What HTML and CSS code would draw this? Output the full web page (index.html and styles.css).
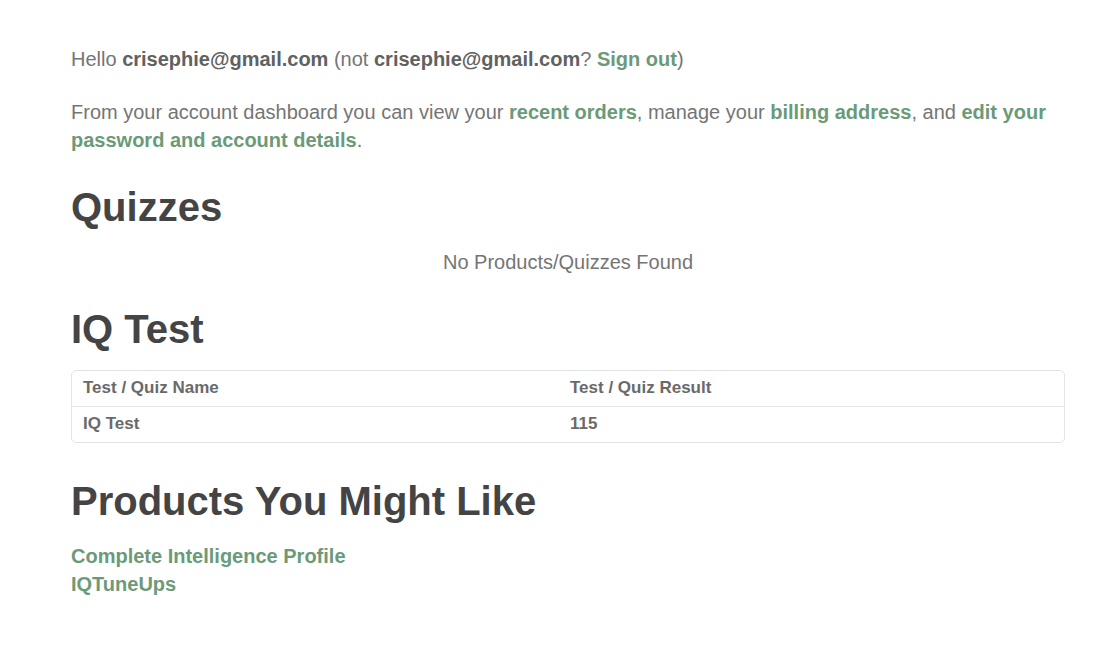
FILE: index.html
```html
<!DOCTYPE html>
<html>
<head>
<meta charset="utf-8">
<link rel="stylesheet" href="styles.css">
</head>
<body>
<main class="account">
  <p class="greet">Hello <strong>crisephie@gmail.com</strong> (not <strong>crisephie@gmail.com</strong>? <a href="#">Sign out</a>)</p>
  <p class="intro">From your account dashboard you can view your <a href="#">recent orders</a>, manage your <a href="#">billing address</a>, and <a href="#">edit your password and account details</a>.</p>

  <h2 class="heading">Quizzes</h2>
  <p class="empty">No Products/Quizzes Found</p>

  <h2 class="heading">IQ Test</h2>
  <table class="results">
    <thead>
      <tr><th class="col-name">Test / Quiz Name</th><th>Test / Quiz Result</th></tr>
    </thead>
    <tbody>
      <tr><td class="col-name">IQ Test</td><td>115</td></tr>
    </tbody>
  </table>

  <h2 class="heading heading-products">Products You Might Like</h2>
  <ul class="products">
    <li><a href="#">Complete Intelligence Profile</a></li>
    <li><a href="#">IQTuneUps</a></li>
  </ul>
</main>
</body>
</html>
```

FILE: styles.css
```css
html, body {
  margin: 0;
  padding: 0;
  background: #ffffff;
}

body {
  font-family: "Liberation Sans", Arial, sans-serif;
  font-size: 20px;
  line-height: 28px;
  color: #757575;
}

.account {
  width: 994px;
  margin-left: 71px;
  padding-top: 45px;
}

p {
  margin: 0;
}

strong {
  font-weight: bold;
  color: #616161;
}

a {
  color: #6b9a78;
  font-weight: bold;
  text-decoration: none;
}

.greet {
  margin-bottom: 25px;
}

.heading {
  margin: 29px 0 17px;
  font-size: 40px;
  line-height: 48px;
  font-weight: bold;
  color: #444444;
}

.empty {
  text-align: center;
}

.heading-products {
  margin-top: 34px;
}

.results {
  width: 100%;
  border-collapse: separate;
  border-spacing: 0;
  border: 1px solid #e4e4e4;
  border-radius: 5px;
  font-size: 17px;
  line-height: 20px;
  font-weight: bold;
  color: #6a6a6a;
  text-align: left;
}

.results th,
.results td {
  padding: 7px 11px 8px;
  font-weight: bold;
}

.results th {
  border-bottom: 1px solid #e4e4e4;
}

.results .col-name {
  width: 465px;
}

.products {
  list-style: none;
  margin: 0;
  padding: 0;
  font-size: 20px;
}
```
